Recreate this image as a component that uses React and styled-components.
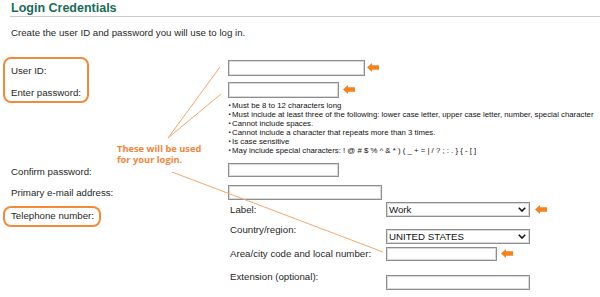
import styled, { createGlobalStyle } from "styled-components";

const GlobalStyle = createGlobalStyle`
  html, body { margin: 0; padding: 0; background: #fff; }
  body {
    font-family: "Liberation Sans", Arial, sans-serif;
    color: #1f1f1f;
    -webkit-font-smoothing: antialiased;
  }
`;

const Page = styled.div`
  position: relative;
  width: 600px;
  height: 297px;
  overflow: hidden;
`;

const Title = styled.h2`
  margin: 0 0 0 10px;
  padding-left: 1px;
  height: 16px;
  line-height: 16px;
  font-size: 12.5px;
  font-weight: bold;
  color: #1a6b5a;
  border-bottom: 1px solid #c9c9c9;
`;

const Intro = styled.p`
  margin: 9.6px 0 0 11px;
  font-size: 9.7px;
  line-height: 12px;
`;

const Form = styled.div`
  display: flex;
  flex-direction: column;
`;

const Row = styled.div`
  display: grid;
  grid-template-columns: 228px 1fr;
  align-items: start;
  margin-top: ${(p) => p.$gap || 0}px;
`;

const Label = styled.div`
  font-size: 9.7px;
  line-height: 12px;
  padding-left: ${(p) => (p.$inset ? 0 : 11)}px;
  margin-top: ${(p) => p.$dy || 0}px;
  white-space: nowrap;
`;

const Callout = styled.div`
  justify-self: start;
  display: flex;
  flex-direction: column;
  gap: ${(p) => p.$gap || 0}px;
  margin: ${(p) => p.$dy || 0}px 0 0 3px;
  padding: ${(p) => p.$pad};
  border: 2px solid #f28a3a;
  border-radius: 8px;
`;

const Stack = styled.div`
  display: flex;
  flex-direction: column;
  align-items: flex-start;
  padding-top: ${(p) => p.$dy || 0}px;
`;

const Field = styled.div`
  display: flex;
  align-items: center;
  gap: ${(p) => p.$gap || 3}px;
  margin-top: ${(p) => p.$dy || 0}px;
`;

const Input = styled.div`
  box-sizing: border-box;
  width: ${(p) => p.$w}px;
  height: ${(p) => p.$h || 16}px;
  background: #fff;
  border: 1px solid #8e8e8e;
  box-shadow: inset 0 0 0 1px #d9d9d9;
`;

const Select = styled.div`
  box-sizing: border-box;
  width: ${(p) => p.$w}px;
  height: 15px;
  display: flex;
  align-items: center;
  justify-content: space-between;
  padding: 0 3px 0 2px;
  border: 1px solid #8e8e8e;
  box-shadow: inset 0 0 0 1px #d9d9d9;
  font-size: 9.7px;
  color: #111;
`;

const Rules = styled.ul`
  margin: 2.75px 0 0;
  padding: 0;
  list-style: none;
  color: #111;
`;

const Rule = styled.li`
  display: flex;
  font-size: 7.8px;
  line-height: 9.1px;
  white-space: nowrap;
  &::before {
    content: "▪";
    width: 3.6px;
    margin-left: 0.5px;
    font-size: 6px;
  }
`;

const SubRow = styled.div`
  display: grid;
  grid-template-columns: 158px auto;
  align-items: start;
  height: ${(p) => p.$h}px;
`;

const SubLabel = styled(Label)`
  padding-left: 2px;
`;

const Overlay = styled.svg`
  position: absolute;
  left: 0;
  top: 0;
  pointer-events: none;
`;

const Note = styled.div`
  position: absolute;
  left: 117px;
  top: 143px;
  font-family: "Open Sans", Lato, sans-serif;
  font-weight: 700;
  font-size: 9.3px;
  line-height: 11px;
  color: #f1863a;
  white-space: nowrap;
  pointer-events: none;
`;

const Pointer = () => (
  <svg width="12" height="9" viewBox="0 0 12 9">
    <polygon points="0,4.5 5,0 5,2.3 12,2.3 12,6.7 5,6.7 5,9" fill="#f5821f" />
  </svg>
);

const Chevron = () => (
  <svg width="8" height="5" viewBox="0 0 8 5">
    <polyline points="0.8,0.8 4,4 7.2,0.8" fill="none" stroke="#111" strokeWidth="1.6" />
  </svg>
);

const rules = [
  "Must be 8 to 12 characters long",
  "Must include at least three of the following: lower case letter, upper case letter, number, special character",
  "Cannot include spaces.",
  "Cannot include a character that repeats more than 3 times.",
  "Is case sensitive",
  "May include special characters: ! @ # $ % ^ & * ) ( _ + = | / ? ; : . } { - [ ]",
];

export default function App() {
  return (
    <Page>
      <GlobalStyle />
      <Title>Login Credentials</Title>
      <Intro>Create the user ID and password you will use to log in.</Intro>
      <Form>
        <Row $gap={18.4}>
          <Callout $gap={10} $pad="5.6px 6px 2.4px 6px">
            <Label $inset>User ID:</Label>
            <Label $inset>Enter password:</Label>
          </Callout>
          <Stack $dy={3}>
            <Field $gap={2}>
              <Input $w={137} />
              <Pointer />
            </Field>
            <Field $gap={4} $dy={6}>
              <Input $w={111} />
              <Pointer />
            </Field>
            <Rules>
              {rules.map((r) => (
                <Rule key={r}>{r}</Rule>
              ))}
            </Rules>
          </Stack>
        </Row>
        <Row $gap={7.6}>
          <Label $dy={3.6}>Confirm password:</Label>
          <Input $w={111} $h={14} />
        </Row>
        <Row $gap={6.4}>
          <Label $dy={2.6}>Primary e-mail address:</Label>
          <Input $w={154} $h={15} />
        </Row>
        <Row $gap={2}>
          <Callout $dy={4} $pad="2.5px 5px 2.5px 6px">
            <Label $inset>Telephone number:</Label>
          </Callout>
          <div>
            <SubRow $h={22.6}>
              <SubLabel $dy={1.9}>Label:</SubLabel>
              <Field $gap={5}>
                <Select $w={144}>
                  <span>Work</span>
                  <Chevron />
                </Select>
                <Pointer />
              </Field>
            </SubRow>
            <SubRow $h={22.4}>
              <SubLabel>Country/region:</SubLabel>
              <Field $dy={4.4}>
                <Select $w={144}>
                  <span>UNITED STATES</span>
                  <Chevron />
                </Select>
              </Field>
            </SubRow>
            <SubRow $h={24.3}>
              <SubLabel $dy={0.9}>Area/city code and local number:</SubLabel>
              <Field $gap={4}>
                <Input $w={111} $h={14} />
                <Pointer />
              </Field>
            </SubRow>
            <SubRow $h={26}>
              <SubLabel>Extension (optional):</SubLabel>
              <Field $dy={3.7}>
                <Input $w={144} $h={15} />
              </Field>
            </SubRow>
          </div>
        </Row>
      </Form>

      <Overlay width="600" height="297" viewBox="0 0 600 297">
        <g stroke="#f5a56c" strokeWidth="1" fill="none">
          <line x1="220" y1="67" x2="168" y2="138" />
          <line x1="221" y1="94" x2="168" y2="138" />
          <line x1="172" y1="172" x2="383" y2="252" />
        </g>
      </Overlay>
      <Note>
        These will be used
        <br />
        for your login.
      </Note>
    </Page>
  );
}
